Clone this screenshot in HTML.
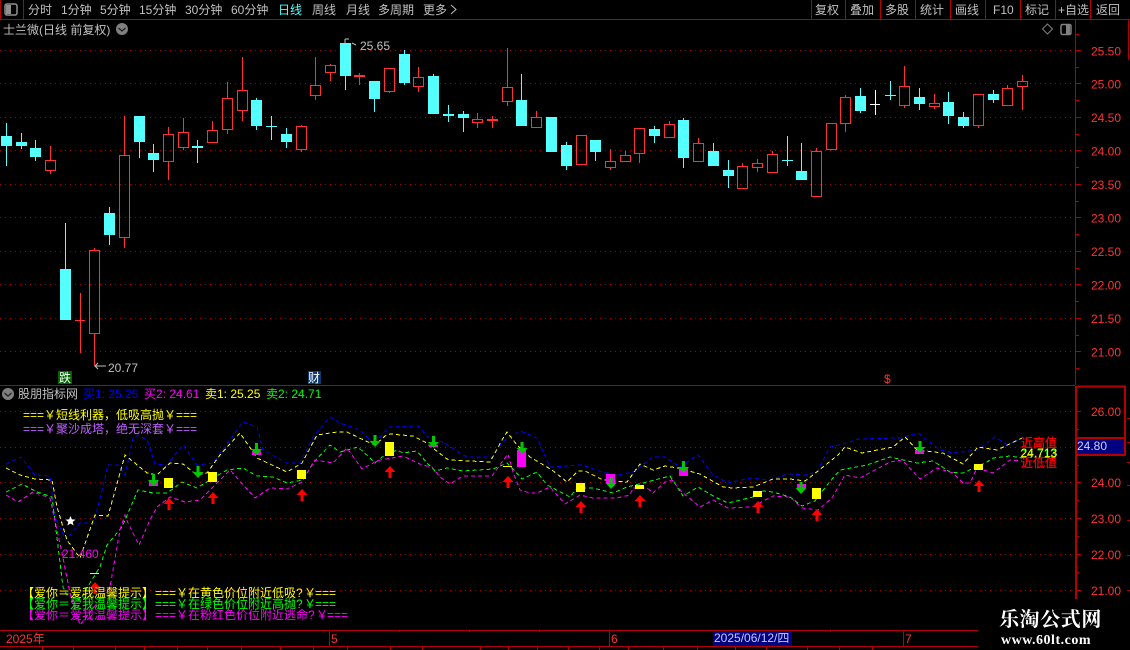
<!DOCTYPE html>
<html><head><meta charset="utf-8"><style>
html,body{margin:0;padding:0;background:#000;width:1130px;height:650px;overflow:hidden}
svg{display:block}
text{font-family:"Liberation Sans","WenQuanYi Zen Hei","Noto Sans CJK SC",sans-serif;font-size:12px}
.g{fill:#c0c0c0}.r{fill:#ff3232}
</style></head><body>
<svg width="1130" height="650" viewBox="0 0 1130 650" xmlns="http://www.w3.org/2000/svg">
<rect width="1130" height="650" fill="#000"/>
<!-- frame lines -->
<g stroke="#b40000" fill="none" shape-rendering="crispEdges">
<path d="M0 19.5H1130M0 385.5H1075M0.5 0V19M23.5 0V19M811.5 0V19M845.5 0V19M880.5 0V19M915.5 0V19M950.5 0V19M985.5 0V19M1020.5 0V19M1055.5 0V19M1090.5 0V19"/>
<path d="M0 630.5H978M0 646.5H978M329.5 630V646M609.5 630V646M903.5 630V646" stroke-width="1"/>
<path d="M42.5 647V650M73.5 647V650M115.5 647V650M144.5 647V650M177.5 647V650M207.5 647V650M241.5 647V650M280.5 647V650M313.5 647V650M347.5 647V650M390.5 647V650M422.5 647V650M480.5 647V650M508.5 647V650M537.5 647V650M568.5 647V650M599.5 647V650M628.5 647V650M663.5 647V650M697.5 647V650M735.5 647V650M766.5 647V650M807.5 647V650M839.5 647V650M872.5 647V650M399.5 630V632M469.5 630V632M539.5 630V632M830.5 630V632"/>
<path d="M1075.5 20V385" />
<path d="M1076 386V599M1125 386V455" stroke-width="2"/>
<path d="M1076 386.5H1126M1076 438H1126M1076 455H1126" stroke-width="2"/>
<path d="M1128.5 20V60"/>
<!-- upper ticks -->
<path d="M1076 50.5H1081M1076 83.5H1081M1076 117.5H1081M1076 150.5H1081M1076 184.5H1081M1076 217.5H1081M1076 251.5H1081M1076 284.5H1081M1076 318.5H1081M1076 351.5H1081"/>
<path d="M1076 34.5H1079M1076 67.5H1079M1076 100.5H1079M1076 134.5H1079M1076 167.5H1079M1076 201.5H1079M1076 234.5H1079M1076 268.5H1079M1076 301.5H1079M1076 335.5H1079M1076 368.5H1079"/>
<!-- lower ticks -->
<path d="M1076 411.5H1081M1076 482.5H1081M1076 518.5H1081M1076 554.5H1081M1076 590.5H1081"/>
<path d="M1076 429.5H1079M1076 465.5H1079M1076 500.5H1079M1076 536.5H1079M1076 572.5H1079"/>
<path d="M1127 418.5H1130M1127 442.5H1130M1127 462.5H1130M1127 485.5H1130M1127 520.5H1130M1127 555.5H1130M1127 590.5H1130"/>
</g>
<rect x="1077" y="439" width="47" height="15" fill="#000080"/>
<!-- dotted grid -->
<path shape-rendering="crispEdges" stroke="#a00000" fill="none" stroke-dasharray="1 4" d="M0 50.5H1075M0 83.5H1075M0 117.5H1075M0 150.5H1075M0 184.5H1075M0 217.5H1075M0 251.5H1075M0 284.5H1075M0 318.5H1075M0 351.5H1075M0 411.5H1075M0 447.5H1075M0 482.5H1075M0 518.5H1075M0 554.5H1075M0 590.5H1075"/>
<!-- toolbar -->
<rect x="5" y="4" width="12" height="11" rx="2" fill="none" stroke="#909090" stroke-width="1.5"/><rect x="6" y="5" width="5" height="9" fill="#909090"/>
<g class="g">
<text x="28" y="14" class="g">分时</text>
<text x="61" y="14" class="g">1分钟</text>
<text x="100" y="14" class="g">5分钟</text>
<text x="139" y="14" class="g">15分钟</text>
<text x="185" y="14" class="g">30分钟</text>
<text x="231" y="14" class="g">60分钟</text>
<text x="278" y="14" fill="#54ffff">日线</text>
<text x="312" y="14" class="g">周线</text>
<text x="346" y="14" class="g">月线</text>
<text x="378" y="14" class="g">多周期</text>
<text x="423" y="14" class="g">更多</text>
<text x="815" y="14" class="g">复权</text>
<text x="850" y="14" class="g">叠加</text>
<text x="885" y="14" class="g">多股</text>
<text x="920" y="14" class="g">统计</text>
<text x="955" y="14" class="g">画线</text>
<text x="993" y="14" class="g">F10</text>
<text x="1025" y="14" class="g">标记</text>
<text x="1058" y="14" class="g">+自选</text>
<text x="1096" y="14" class="g">返回</text>
</g>
<path d="M451 5l5 4.500-5 4.500" fill="none" stroke="#c0c0c0"/>
<!-- title row -->
<text x="3" y="34" class="g">士兰微(日线 前复权)</text>
<circle cx="122" cy="29" r="6" fill="#808080"/><path d="M118.500 28l3.500 3 3.500-3" fill="none" stroke="#222" stroke-width="1.300"/>
<path d="M1047.500 24l5 5-5 5-5-5z" fill="none" stroke="#808080"/>
<rect x="1061" y="24.500" width="10" height="10" rx="1.500" fill="none" stroke="#808080" stroke-width="1.500"/><rect x="1066" y="25" width="4" height="9" fill="#808080"/>
<!-- axis labels -->
<g class="r">
<text x="1091" y="55.500" class="r">25.50</text><text x="1091" y="88.500" class="r">25.00</text><text x="1091" y="122" class="r">24.50</text><text x="1091" y="155.500" class="r">24.00</text><text x="1091" y="189" class="r">23.50</text><text x="1091" y="222.500" class="r">23.00</text><text x="1091" y="256" class="r">22.50</text><text x="1091" y="289.500" class="r">22.00</text><text x="1091" y="323" class="r">21.50</text><text x="1091" y="356.500" class="r">21.00</text>
<text x="1091" y="416" class="r">26.00</text><text x="1091" y="487" class="r">24.00</text><text x="1091" y="523" class="r">23.00</text><text x="1091" y="559" class="r">22.00</text><text x="1091" y="595" class="r">21.00</text>
</g>
<text x="1077" y="450" fill="#d0d0ff">24.80</text>
<!-- candles -->
<g shape-rendering="crispEdges" fill="none">
<path stroke="#54ffff" d="M6.500 123V166M21.500 133V149M35.500 140V161M65.500 223V269M109.500 207V245M139.500 142V158M153.500 144V172M197.500 140V163M256.500 98V130M271.500 116V140M266 126.500H277M286.500 128V148M345.500 76V90M374.500 99V112M404.500 50V85M433.500 74V114M448.500 105V122M463.500 111V132M521.500 74V100M566.500 142V170M595.500 152V161M654.500 126V143M683.500 118V168M713.500 143V151M728.500 160V188M787.500 136V166M782 160.500H793M801.500 143V171M860.500 88V113M890.500 81V100M885 95.500H896M919.500 88V110M948.500 92V124M963.500 112V128M993.500 90V103"/>
<path fill="#54ffff" d="M1 136h11v10h-11zM16 142h11v4h-11zM30 148h11v9h-11zM60 269h11v51h-11zM104 213h11v22h-11zM134 116h11v26h-11zM148 153h11v7h-11zM192 146h11v2h-11zM251 100h11v26h-11zM281 134h11v8h-11zM340 43h11v33h-11zM369 81h11v18h-11zM399 54h11v29h-11zM428 76h11v38h-11zM443 114h11v2h-11zM458 114h11v4h-11zM516 100h11v26h-11zM546 117h11v35h-11zM561 145h11v21h-11zM590 140h11v12h-11zM649 129h11v7h-11zM678 120h11v38h-11zM708 151h11v15h-11zM723 170h11v6h-11zM796 171h11v9h-11zM855 96h11v15h-11zM914 97h11v7h-11zM943 102h11v14h-11zM958 117h11v9h-11zM988 94h11v6h-11z"/>
<path stroke="#ff3232" d="M50.500 146V160M45.500 160.500h10v10h-10zM50.500 170V174M80.500 293V353M75 320.500H85M94.500 248V250M89.500 250.500h10v83h-10zM94.500 333V366M124.500 116V155M119.500 155.500h10v82h-10zM124.500 237V248M168.500 127V134M163.500 134.500h10v27h-10zM168.500 161V180M183.500 118V132M178.500 132.500h10v15h-10zM183.500 147V150M212.500 121V130M207.500 130.500h10v12h-10zM227.500 82V98M222.500 98.500h10v31h-10zM227.500 129V134M242.500 57V90M237.500 90.500h10v20h-10zM242.500 110V121M301.500 125V126M296.500 126.500h10v23h-10zM301.500 149V152M315.500 57V85M310.500 85.500h10v10h-10zM315.500 95V100M330.500 64V65M325.500 65.500h10v7h-10zM330.500 72V81M359.500 73V85M354.500 75.500h10v1h-10zM384.500 68.500h10v23h-10zM389.500 91V93M418.500 67V77M413.500 77.500h10v9h-10zM418.500 86V92M477.500 113V119M472.500 119.500h10v3h-10zM477.500 122V128M492.500 116V128M487.500 119.500h10v1h-10zM507.500 48V87M502.500 87.500h10v14h-10zM507.500 101V106M536.500 111V117M531.500 117.500h10v10h-10zM536.500 127V128M576.500 135.500h10v29h-10zM610.500 149V161M605.500 161.500h10v6h-10zM610.500 167V170M625.500 151V155M620.500 155.500h10v6h-10zM634.500 128.500h10v25h-10zM639.500 153V163M669.500 121V124M664.500 124.500h10v13h-10zM698.500 138V143M693.500 143.500h10v18h-10zM742.500 163V166M737.500 166.500h10v22h-10zM757.500 159V163M752.500 163.500h10v4h-10zM757.500 167V172M772.500 151V154M767.500 154.500h10v18h-10zM816.500 148V151M811.500 151.500h10v45h-10zM816.500 196V197M826.500 123.500h10v26h-10zM831.500 149V150M845.500 95V97M840.500 97.500h10v26h-10zM845.500 123V132M904.500 66V86M899.500 86.500h10v19h-10zM904.500 105V108M934.500 94V103M929.500 103.500h10v3h-10zM934.500 106V109M973.500 94.500h10v31h-10zM978.500 125V128M1007.500 85V88M1002.500 88.500h10v17h-10zM1007.500 105V106M1022.500 75V81M1017.500 81.500h10v5h-10zM1022.500 86V110"/>
<path stroke="#ffffff" d="M875.500 90V115M870 104.500H880"/>
</g>
<!-- price flags -->
<path d="M345 44V39M345 39h4M352 43l4 2" stroke="#c0c0c0" fill="none"/>
<text x="360" y="50" class="g">25.65</text>
<path d="M95 366h11M98 363l-3 3 3 3" stroke="#c0c0c0" fill="none"/>
<text x="108" y="372" class="g">20.77</text>
<rect x="58" y="371" width="14" height="13" fill="#006400"/><text x="59" y="382" fill="#ffffff">跌</text>
<rect x="308" y="371" width="13" height="13" fill="#0c3a6e"/><text x="308" y="382" fill="#ffffff">财</text>
<text x="884" y="383" fill="#ff3232">$</text>
<!-- indicator title -->
<circle cx="8" cy="394" r="6" fill="#808080"/><path d="M4.500 393l3.500 3 3.500-3" fill="none" stroke="#222" stroke-width="1.300"/>
<text x="18" y="398" class="g">股朋指标网</text>
<text x="83" y="398" fill="#0000ff">买1: 25.25</text>
<text x="144" y="398" fill="#ff00ff">买2: 24.61</text>
<text x="205" y="398" fill="#ffff00">卖1: 25.25</text>
<text x="266" y="398" fill="#00ff00">卖2: 24.71</text>
<text x="23" y="419" fill="#ffff00">===￥短线利器，低吸高抛￥===</text>
<text x="23" y="433" fill="#c060ff">===￥聚沙成塔，绝无深套￥===</text>
<!-- dashed indicator lines -->
<g fill="none" stroke-dasharray="4 3" shape-rendering="crispEdges">
<polyline stroke="#0000ff" points="6,464 21,457 35,475 50,476 55,517 66,540 80,523 94,523 108,465 118,465 125,475 133,438 138,435 147,440 155,464 167,465 183,445 197,465 213,463 243,422 257,427 263,450 287,463 300,463 313,437 330,417 340,423 360,430 375,445 383,433 390,427 418,426 428,437 445,443 460,453 467,457 493,457 502,442 520,431 537,438 550,467 582,465 602,472 617,475 633,472 653,457 665,457 680,467 698,455 713,475 728,483 750,478 770,480 788,474 805,475 817,472 830,447 847,443 858,439 900,438 918,433 940,450 953,453 977,450 995,437 1008,445 1022,438"/>
<polyline stroke="#ffff00" points="6,468 20,475 35,479 52,480 57,507 67,540 80,558 95,515 108,516 125,455 147,473 157,475 170,463 183,464 197,475 207,473 220,455 240,433 257,458 287,472 302,463 317,435 337,432 347,432 370,443 375,445 385,436 390,434 413,436 425,442 447,459 450,460 490,462 502,440 507,432 517,445 530,457 552,470 567,482 578,471 585,471 603,480 627,482 640,464 653,470 665,466 678,468 700,474 723,487 732,488 753,487 773,479 790,479 805,481 813,475 838,455 845,447 862,453 893,447 905,437 917,450 943,453 963,464 978,447 997,450 1022,438"/>
<polyline stroke="#00ff00" points="6,492 22,484 37,492 52,497 63,587 67,595 80,600 90,583 100,567 107,545 122,527 138,490 153,493 167,493 182,482 197,488 213,478 227,470 243,468 257,476 273,477 287,483 303,480 313,463 330,445 340,452 358,447 370,458 375,463 382,457 397,450 403,453 417,451 427,463 435,471 447,468 463,471 493,469 507,463 512,468 522,479 537,472 547,485 570,497 577,488 593,488 613,493 627,487 647,482 670,476 683,496 698,487 715,497 728,503 753,497 763,491 773,492 790,497 802,506 815,501 827,485 840,470 867,465 890,457 917,463 933,461 950,472 963,473 987,462 993,458 1010,456 1022,458"/>
<polyline stroke="#ff00ff" points="6,495 18,502 33,492 50,498 62,553 70,593 80,625 110,587 120,530 125,515 128,523 139,545 150,520 157,507 170,497 185,502 200,500 213,487 230,470 255,498 270,488 287,489 302,482 315,460 333,463 347,448 362,469 375,462 380,460 403,456 422,465 432,467 440,477 450,484 463,476 492,476 502,462 508,454 513,472 520,490 530,493 537,493 550,487 565,504 580,495 593,498 617,498 630,495 633,488 647,488 653,493 665,482 672,480 682,492 700,507 713,500 728,508 752,507 773,496 790,497 802,508 818,510 832,498 845,475 860,478 890,462 902,460 920,479 937,468 953,473 963,483 970,483 977,468 993,473 1010,460 1022,461"/>
</g>
<!-- magenta and yellow blocks -->
<path fill="#ff00ff" d="M149 480h9v6h-9zM252 451h9v4h-9zM517 450h9v17h-9zM606 474h9v9h-9zM679 468h9v8h-9zM429 445h9v2h-9zM797 484h9v4h-9zM915 450h9v4h-9z"/>
<path fill="#ffff00" d="M164 478h9v10h-9zM208 472h9v10h-9zM297 470h9v9h-9zM385 442h9v14h-9zM576 483h9v9h-9zM635 485h9v4h-9zM753 491h9v6h-9zM812 488h9v11h-9zM974 464h9v6h-9zM503 466h9v1h-9z"/>
<!-- green down arrows -->
<path fill="#00c800" d="M152 474h3v6h4l-5.500 6-5.500-6h4zM196.500 466h3v6h4l-5.500 6-5.500-6h4zM255 443h3v6h4l-5.500 6-5.500-6h4zM373.500 435h3v6h4l-5.500 6-5.500-6h4zM432 436h3v6h4l-5.500 6-5.500-6h4zM520.500 442h3v6h4l-5.500 6-5.500-6h4zM609.500 477h3v6h4l-5.500 6-5.500-6h4zM682 461h3v6h4l-5.500 6-5.500-6h4zM799.500 482h3v6h4l-5.500 6-5.500-6h4zM918.500 441h3v6h4l-5.500 6-5.500-6h4z"/>
<!-- red up arrows -->
<path fill="#ff0000" d="M95 582l5.500 6h-4v6h-3v-6h-4zM169 498l5.500 6h-4v6h-3v-6h-4zM213 492l5.500 6h-4v6h-3v-6h-4zM302 489l5.500 6h-4v6h-3v-6h-4zM390 466l5.500 6h-4v6h-3v-6h-4zM508 476l5.500 6h-4v6h-3v-6h-4zM581 501l5.500 6h-4v6h-3v-6h-4zM640 495l5.500 6h-4v6h-3v-6h-4zM758 501l5.500 6h-4v6h-3v-6h-4zM817 509l5.500 6h-4v6h-3v-6h-4zM979 480l5.500 6h-4v6h-3v-6h-4z"/>
<!-- star etc -->
<path fill="#ffffff" d="M70.500 516l1.400 3.400 3.600.2-2.800 2.300.9 3.600-3.100-2-3.100 2 .9-3.600-2.800-2.300 3.600-.2z"/>
<text x="62" y="558" fill="#ff00ff">21.460</text>
<path stroke="#e0e0e0" fill="none" shape-rendering="crispEdges" d="M90 573.500H99"/>
<!-- right indicator labels -->
<text x="1021" y="447" fill="#ff0000" stroke="#ff0000" stroke-width=".3">近高值</text>
<text x="1021" y="467" fill="#ff0000" stroke="#ff0000" stroke-width=".3">近低值</text>
<text x="1020" y="458" fill="#00ff00">24.713</text>
<text x="1020.600" y="457" fill="#ffff00">24.713</text>
<!-- bottom text -->
<text x="22" y="597" fill="#ffff00">【爱你＝爱我温馨提示】<tspan x="155">===</tspan><tspan x="176">￥</tspan><tspan x="188">在黄色价位附近低吸</tspan>?<tspan x="304">￥</tspan><tspan x="315">===</tspan></text>
<text x="22" y="608" fill="#00ff00">【爱你＝爱我温馨提示】<tspan x="155">===</tspan><tspan x="176">￥</tspan><tspan x="188">在绿色价位附近高抛</tspan>?<tspan x="304">￥</tspan><tspan x="315">===</tspan></text>
<text x="22" y="619" fill="#ff00ff">【爱你＝爱我温馨提示】<tspan x="155">===</tspan><tspan x="176">￥</tspan><tspan x="188">在粉红色价位附近逃命</tspan>?<tspan x="316">￥</tspan><tspan x="327">===</tspan></text>
<!-- time axis -->
<text x="6" y="643" class="r">2025年</text>
<text x="331" y="643" class="r">5</text>
<text x="611" y="643" class="r">6</text>
<text x="905" y="643" class="r">7</text>
<rect x="713" y="631" width="79" height="15" fill="#000080"/>
<text x="714" y="642" fill="#c8c8ff">2025/06/12/四</text>
<!-- watermark -->
<rect x="978" y="599" width="152" height="51" fill="#000"/>
<text x="999" y="626" fill="#ffffff" style="font-family:'Noto Serif CJK SC','Liberation Serif',serif;font-size:20px;font-weight:700;letter-spacing:.6px">乐淘公式网</text>
<text x="1001" y="644" fill="#ffffff" style="font-family:'Liberation Serif',serif;font-size:14px;font-weight:700;letter-spacing:.5px">www.60lt.com</text>
</svg>
</body></html>
